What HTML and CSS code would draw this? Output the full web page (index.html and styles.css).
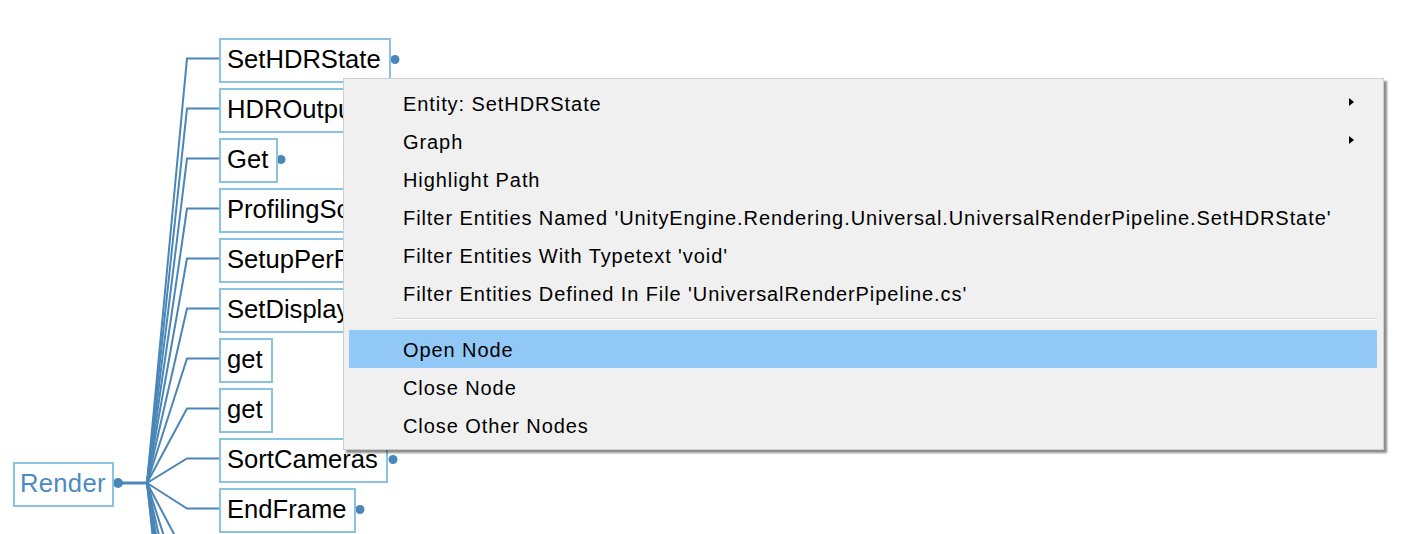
FILE: index.html
```html
<!DOCTYPE html>
<html>
<head>
<meta charset="utf-8">
<link rel="stylesheet" href="styles.css">
</head>
<body>
<div class="canvas">
  <svg class="edges" width="1402" height="534" viewBox="0 0 1402 534">
    <g fill="none" stroke="#4a86b8" stroke-width="2">
      <path d="M147 483 L187 58.5 L219 58.5"/>
      <path d="M147 483 L187 108.5 L219 108.5"/>
      <path d="M147 483 L187 158.5 L219 158.5"/>
      <path d="M147 483 L187 208.5 L219 208.5"/>
      <path d="M147 483 L187 258.5 L219 258.5"/>
      <path d="M147 483 L187 308.5 L219 308.5"/>
      <path d="M147 483 L187 358.5 L219 358.5"/>
      <path d="M147 483 L187 408.5 L219 408.5"/>
      <path d="M147 483 L187 458.5 L219 458.5"/>
      <path d="M147 483 L187 508.5 L219 508.5"/>
      <path d="M147 483 L187 558.5"/>
      <path d="M147 483 L187 608.5"/>
      <path d="M147 483 L187 658.5"/>
      <path d="M147 483 L187 708.5"/>
      <path d="M147 483 L187 758.5"/>
      <path d="M147 483 L187 808.5"/>
      <path d="M147 483 L187 858.5"/>
    </g>
    <path d="M118 483 L147 483" stroke="#4a86b8" stroke-width="3"/>
    <g fill="#4a86b8">
      <circle cx="118" cy="483" r="5"/>
      <circle cx="395" cy="59.5" r="4.5"/>
      <circle cx="281" cy="159.5" r="4.5"/>
      <circle cx="393" cy="459.5" r="4.5"/>
      <circle cx="360" cy="509.5" r="4.5"/>
    </g>
  </svg>

  <div class="node root" style="left:13px;top:462px">Render</div>
  <div class="node" style="left:219px;top:38px">SetHDRState</div>
  <div class="node clipped" style="left:219px;top:88px">HDROutputUtils</div>
  <div class="node" style="left:219px;top:138px">Get</div>
  <div class="node clipped" style="left:219px;top:188px">ProfilingScope</div>
  <div class="node clipped" style="left:219px;top:238px">SetupPerFrameShaderConstants</div>
  <div class="node clipped" style="left:219px;top:288px">SetDisplayHDROutput</div>
  <div class="node" style="left:219px;top:338px">get</div>
  <div class="node" style="left:219px;top:388px">get</div>
  <div class="node" style="left:219px;top:438px">SortCameras</div>
  <div class="node" style="left:219px;top:488px">EndFrame</div>

  <div class="menu">
    <div class="item sub">Entity: SetHDRState<span class="arrow"></span></div>
    <div class="item sub">Graph<span class="arrow"></span></div>
    <div class="item">Highlight Path</div>
    <div class="item">Filter Entities Named 'UnityEngine.Rendering.Universal.UniversalRenderPipeline.SetHDRState'</div>
    <div class="item">Filter Entities With Typetext 'void'</div>
    <div class="item">Filter Entities Defined In File 'UniversalRenderPipeline.cs'</div>
    <div class="sep"></div>
    <div class="item active">Open Node</div>
    <div class="item">Close Node</div>
    <div class="item">Close Other Nodes</div>
  </div>
</div>
</body>
</html>
```
FILE: styles.css
```css
html, body {
  margin: 0;
  padding: 0;
  background: #ffffff;
  overflow: hidden;
}
.canvas {
  position: relative;
  width: 1402px;
  height: 534px;
  overflow: hidden;
  font-family: "Liberation Sans", Arial, sans-serif;
}
.edges {
  position: absolute;
  left: 0;
  top: 0;
}
.node {
  position: absolute;
  box-sizing: border-box;
  height: 45px;
  padding: 0 8px 0 6px;
  border: 2px solid #88c3e3;
  background: #ffffff;
  color: #000000;
  font-size: 25.6px;
  line-height: 39px;
  white-space: nowrap;
}
.node.clipped {
  width: 150px;
  overflow: hidden;
}
.node.root {
  color: #4b8bc3;
  padding: 0 6px 0 5px;
  letter-spacing: 0.3px;
}
.menu {
  position: absolute;
  left: 343px;
  top: 78px;
  width: 1041px;
  box-sizing: border-box;
  padding: 5px 6px 5px 5px;
  background: #f0f0f0;
  border: 1px solid #cfcfcf;
  box-shadow: 3px 3px 2px rgba(0, 0, 0, 0.45);
  display: flex;
  flex-direction: column;
}
.item {
  position: relative;
  height: 38px;
  box-sizing: border-box;
  padding-top: 1px;
  line-height: 38px;
  padding-left: 54px;
  font-size: 20px;
  letter-spacing: 0.92px;
  color: #000000;
  white-space: nowrap;
}
.item.active {
  background: #91c8f6;
}
.arrow {
  position: absolute;
  right: 23px;
  top: 14px;
  width: 0;
  height: 0;
  border-top: 4.5px solid transparent;
  border-bottom: 4.5px solid transparent;
  border-left: 5px solid #000000;
}
.sep {
  height: 18px;
  box-sizing: border-box;
  margin-left: 45px;
  padding-top: 6px;
}
.sep::before {
  content: "";
  display: block;
  height: 1px;
  background: #d5d5d5;
  border-bottom: 1px solid #ffffff;
}
```
